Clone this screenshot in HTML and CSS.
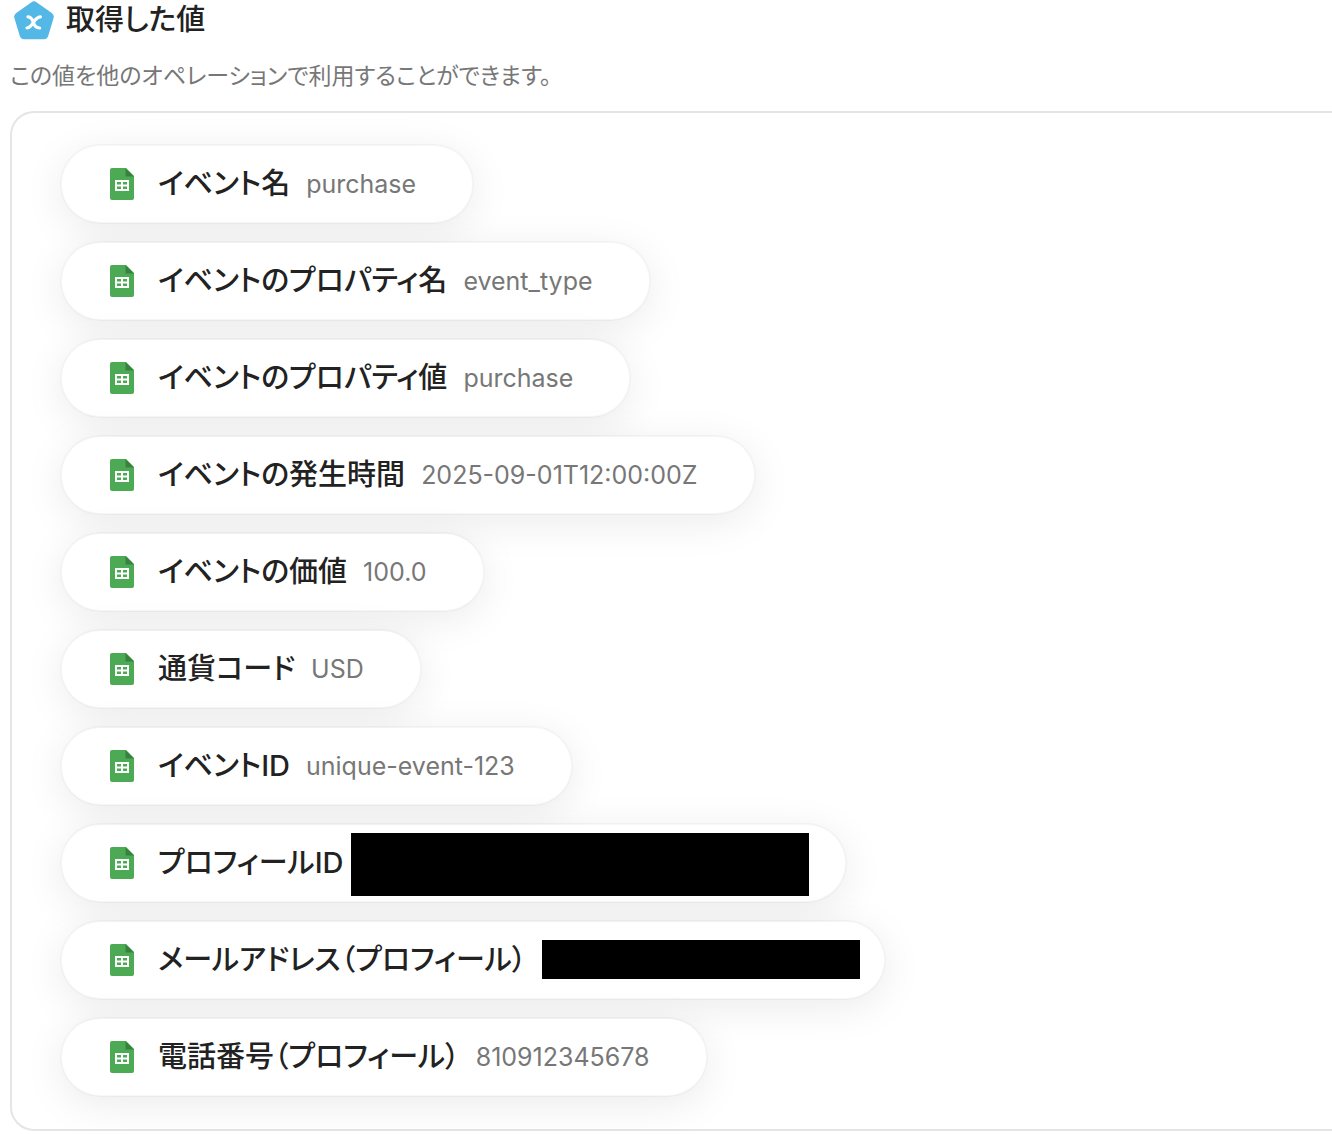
FILE: index.html
```html
<!DOCTYPE html>
<html lang="ja">
<head>
    <meta charset="UTF-8">
    <meta name="viewport" content="width=device-width, initial-scale=1">
    <title>取得した値</title>
    <link rel="stylesheet" href="styles.css">
</head>
<body>
    <svg class="symbols" aria-hidden="true">
        <symbol id="sheet" viewBox="0 0 24 32">
            <path d="M2 0h14l8 8v22a2 2 0 0 1-2 2H2a2 2 0 0 1-2-2V2a2 2 0 0 1 2-2z" fill="#4caa54"/>
            <path d="M15.500 0L24 8.500h-8.500z" fill="#37833d"/>
            <path d="M5 12h14v11H5z" fill="#fff"/>
            <path d="M7 14h4v2.500H7zM13 14h4v2.500h-4zM7 18.500h4V21H7zM13 18.500h4V21h-4z" fill="#4caa54"/>
        </symbol>
    </svg>
    <header>
        <svg class="logo" viewBox="0 0 40 40" aria-hidden="true">
            <path d="M17.500 2.200Q20 .5 22.500 2.200L37.800 13Q40.500 15 39.600 18L34.200 36Q33 39.300 29.800 39.300H10.200Q7 39.300 5.800 36L.4 18Q-.5 15 2.200 13z" fill="#54b8e6"/>
            <path d="M14 16.800C17 16.600 18 18.500 19.300 22.300C20.600 26.200 22 28.200 25.600 28M26.400 16.800C23 17 21.200 19.500 19.400 22.300C17.600 25.400 16 27.800 13 28" fill="none" stroke="#fff" stroke-width="3.200" stroke-linecap="round"/>
        </svg>
        <h1>取得した値</h1>
    </header>
    <p class="description">この値を他のオペレーションで利用することができます。</p>
    <ul class="values">
        <li><svg class="icon" aria-hidden="true"><use href="#sheet"/></svg><b>イベント名</b><span class="value">purchase</span></li>
        <li><svg class="icon" aria-hidden="true"><use href="#sheet"/></svg><b>イベントのプロパティ名</b><span class="value">event_type</span></li>
        <li><svg class="icon" aria-hidden="true"><use href="#sheet"/></svg><b>イベントのプロパティ値</b><span class="value">purchase</span></li>
        <li><svg class="icon" aria-hidden="true"><use href="#sheet"/></svg><b>イベントの発生時間</b><span class="value">2025-09-01T12:00:00Z</span></li>
        <li><svg class="icon" aria-hidden="true"><use href="#sheet"/></svg><b>イベントの価値</b><span class="value">100.0</span></li>
        <li><svg class="icon" aria-hidden="true"><use href="#sheet"/></svg><b>通貨コード</b><span class="value">USD</span></li>
        <li><svg class="icon" aria-hidden="true"><use href="#sheet"/></svg><b>イベントID</b><span class="value">unique-event-123</span></li>
        <li><svg class="icon" aria-hidden="true"><use href="#sheet"/></svg><b>プロフィールID</b><span class="value masked masked-id"></span></li>
        <li><svg class="icon" aria-hidden="true"><use href="#sheet"/></svg><b>メールアドレス（プロフィール）</b><span class="value masked masked-mail"></span></li>
        <li><svg class="icon" aria-hidden="true"><use href="#sheet"/></svg><b>電話番号（プロフィール）</b><span class="value">810912345678</span></li>
    </ul>
</body>
</html>
```
FILE: styles.css
```css
* {
    box-sizing: border-box;
}

body {
    margin: 0;
    padding: 0 0 3px 10px;
    background: #fff;
    color: #222;
    font-family: Inter, "Noto Sans CJK JP", sans-serif;
    font-feature-settings: "palt";
    overflow-x: hidden;
}

.symbols {
    position: absolute;
    width: 0;
    height: 0;
}

header {
    display: flex;
    align-items: center;
    gap: 12px;
    height: 40px;
    padding-left: 4px;
}

.logo {
    width: 40px;
    height: 40px;
}

h1 {
    margin: 0;
    font-size: 29px;
    font-weight: 500;
    line-height: 40px;
}

.description {
    margin: 20px 0 19px;
    color: #777;
    font-size: 23px;
    line-height: 32px;
}

.values {
    display: flex;
    flex-direction: column;
    align-items: flex-start;
    gap: 17px;
    margin: 0;
    padding: 31px 48px 32px;
    list-style: none;
    border: 2px solid #e5e5e5;
    border-right: 0;
    border-radius: 24px 0 0 24px;
}

.values li {
    display: flex;
    align-items: center;
    height: 80px;
    padding: 0 56px 0 48px;
    background: #fff;
    border: 2px solid rgba(0, 0, 0, 0.03);
    background-clip: padding-box;
    border-radius: 40px;
    box-shadow: 0 8px 40px rgba(0, 0, 0, 0.08);
    white-space: nowrap;
}

.icon {
    width: 24px;
    height: 32px;
    margin-right: 24px;
}

.values b {
    font-size: 29px;
    font-weight: 500;
    line-height: 40px;
}

.value {
    margin-left: 16px;
    color: #777;
    font-size: 25px;
    line-height: 32px;
}

/* black bar laid over the value, wider than the text */
.masked {
    position: relative;
    height: 32px;
}

.masked::after {
    content: "";
    position: absolute;
    background: #000;
}

.masked-id {
    width: 429px;
}

.masked-id::after {
    inset: -14px -20px -17px -9px;
}

.masked-mail {
    width: 286px;
}

.masked-mail::after {
    inset: -4px -32px -3px 0;
}
```
